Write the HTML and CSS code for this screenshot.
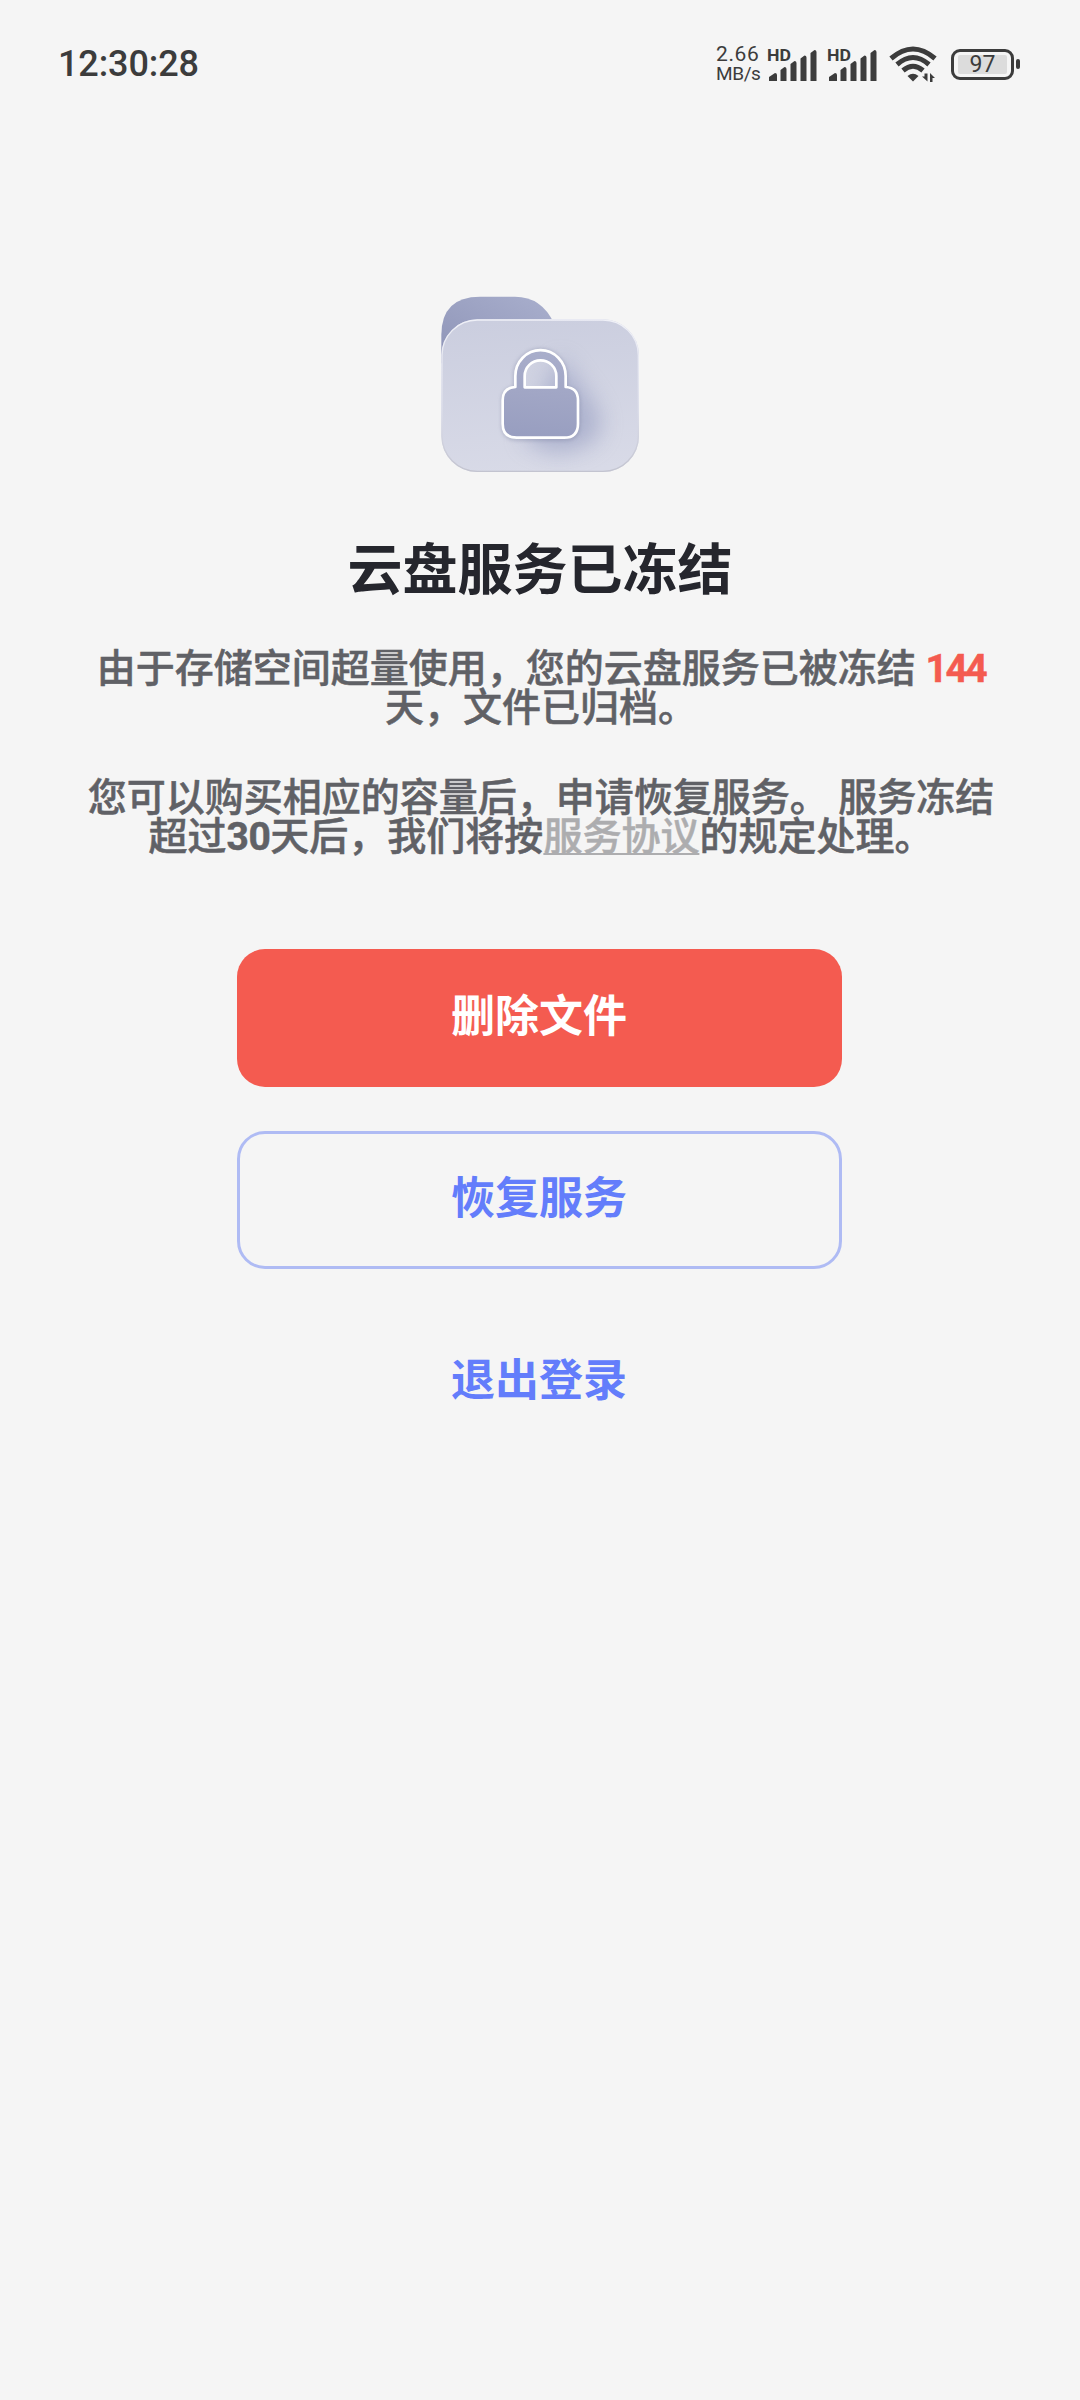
FILE: index.html
```
<!DOCTYPE html>
<html lang="zh-CN">
<head>
    <meta charset="UTF-8">
    <title>云盘服务已冻结</title>
    <link rel="stylesheet" href="styles.css">
</head>
<body>
    <div class="status-bar">
        <div class="clock">12:30:28</div>
        <div class="net-speed">
            <div class="speed-value">2.66</div>
            <div class="speed-unit">MB/s</div>
        </div>
        <svg class="signal" viewBox="0 0 52 36">
            <text x="0" y="15" textLength="24" lengthAdjust="spacingAndGlyphs">HD</text>
            <path d="M2 35v-4l6-4q2 0 2 2v6zM13.500 35V24l4-3q2 0 2 2v12zM23.500 35V18l4-3q2 0 2 2v18zM33.500 35V12.500l4-3q2 0 2 2V35zM43.500 35V7l4-3q2 0 2 2v29z"/>
        </svg>
        <svg class="signal" viewBox="0 0 52 36">
            <text x="0" y="15" textLength="24" lengthAdjust="spacingAndGlyphs">HD</text>
            <path d="M2 35v-4l6-4q2 0 2 2v6zM13.500 35V24l4-3q2 0 2 2v12zM23.500 35V18l4-3q2 0 2 2v18zM33.500 35V12.500l4-3q2 0 2 2V35zM43.500 35V7l4-3q2 0 2 2v29z"/>
        </svg>
        <svg class="wifi" viewBox="0 0 48 36">
            <g fill="none" stroke="#3c3c3c" stroke-width="5">
                <path d="M2 12.500Q24-6.500 46 12.500"/>
                <path d="M8 18.500Q24 4.500 40 18.500"/>
                <path d="M14 24.500Q24 16 34 24.500"/>
            </g>
            <path d="M18.500 30q5.500-4.500 11 0L24 35.500z"/>
            <path d="M35.500 27.500h3v8l-5.500-5h2.500zM41 36v-9l5 5h-2.500v4z"/>
        </svg>
        <div class="battery"><span>97</span></div>
        <div class="battery-cap"></div>
    </div>

    <div class="container">
        <svg class="folder" viewBox="0 0 720 630">
            <defs>
                <linearGradient id="back" x1="1" y1="0" x2="0" y2="1">
                    <stop offset="0" stop-color="#a9afcd"/>
                    <stop offset="1" stop-color="#8e94b7"/>
                </linearGradient>
                <linearGradient id="front" x1="0.400" y1="0" x2="0.500" y2="1">
                    <stop offset="0" stop-color="#cbcedf"/>
                    <stop offset="1" stop-color="#d8dae7"/>
                </linearGradient>
                <linearGradient id="edge" x1="0" y1="0" x2="0" y2="1">
                    <stop offset="0" stop-color="#eff0f7"/>
                    <stop offset="0.600" stop-color="#dcdeea"/>
                    <stop offset="1" stop-color="#c3c4d0"/>
                </linearGradient>
                <linearGradient id="lock" x1="0.500" y1="0" x2="0.400" y2="1">
                    <stop offset="0" stop-color="#a9aecb"/>
                    <stop offset="0.500" stop-color="#a1a6c5"/>
                    <stop offset="1" stop-color="#989ec0"/>
                </linearGradient>
                <filter id="blur" x="-50%" y="-50%" width="200%" height="200%">
                    <feGaussianBlur stdDeviation="34"/>
                </filter>
                <filter id="soft" x="-50%" y="-50%" width="200%" height="200%">
                    <feGaussianBlur stdDeviation="7"/>
                </filter>
                <clipPath id="panel">
                    <rect x="64" y="118" width="593" height="458" rx="108"/>
                </clipPath>
            </defs>
            <path d="M64 250V165Q64 50 180 50H285Q365 50 402 130L340 250z" fill="url(#back)"/>
            <rect x="64" y="118" width="593" height="458" rx="108" fill="url(#front)"/>
            <g clip-path="url(#panel)">
                <path d="M420 230L500 340Q550 400 540 450Q520 510 400 520L310 480z" fill="#8f96bd" opacity="0.550" filter="url(#blur)"/>
            </g>
            <rect x="66" y="120" width="589" height="454" rx="106" fill="none" stroke="url(#edge)" stroke-width="4"/>
            <path d="M286 324V288A75 77 0 0 1 436 288V324Q474 326 474 364V434Q474 476 432 476H292Q250 476 250 434V364Q250 326 286 324z" fill="none" stroke="#777d9b" stroke-width="8" opacity="0.600" filter="url(#soft)"/>
            <path d="M286 321V288A75 77 0 0 1 437 288V321Q474 323 474 361V431Q474 473 432 473H290Q248 473 248 431V361Q248 323 286 321zM314 322H409V288A47.500 47 0 0 0 314 288z" fill="url(#lock)" fill-rule="evenodd" stroke="#fff" stroke-width="8" stroke-linejoin="round"/>
        </svg>

        <h1>云盘服务已冻结</h1>

        <p>由于存储空间超量使用，您的云盘服务已被冻结 <b class="days">144</b><br>天，文件已归档。</p>
        <p>您可以购买相应的容量后，申请恢复服务。 服务冻结<br>超过<b class="num">30</b>天后，我们将按<a class="agreement">服务协议</a>的规定处理。</p>

        <div class="actions">
            <div class="btn btn-delete">删除文件</div>
            <div class="btn btn-restore">恢复服务</div>
            <div class="btn btn-logout">退出登录</div>
        </div>
    </div>
</body>
</html>
```
FILE: styles.css
```
body {
    margin: 0;
    min-height: 2400px;
    background-color: #f5f5f5;
    font-family: Roboto, "Noto Sans CJK SC", sans-serif;
}
.status-bar {
    display: flex;
    align-items: center;
    box-sizing: border-box;
    height: 128px;
    padding: 0 60px 0 58px;
    color: #3c3c3c;
}
.clock {
    flex: 1;
    font-size: 36px;
    font-weight: 500;
    letter-spacing: -0.1px;
}
.net-speed {
    width: 43px;
    margin-right: 8px;
    line-height: 20px;
}
.speed-value {
    font-size: 21px;
    letter-spacing: 0.6px;
}
.speed-unit {
    font-size: 19px;
    letter-spacing: -0.4px;
}
.signal {
    width: 52px;
    height: 36px;
    margin-right: 8px;
    fill: #3c3c3c;
    font-size: 16px;
    font-weight: bold;
}
.wifi {
    width: 48px;
    height: 36px;
    margin: 0 14px 0 2px;
    fill: #3c3c3c;
}
.battery {
    box-sizing: border-box;
    width: 63px;
    height: 31px;
    padding: 3px 4px;
    border: 3px solid #3c3c3c;
    border-radius: 9px;
}
.battery span {
    display: block;
    height: 19px;
    border-radius: 2px;
    background-color: #dcdcdc;
    font-size: 23px;
    line-height: 19px;
    text-align: center;
}
.battery-cap {
    width: 4px;
    height: 10px;
    margin-left: 2px;
    border-radius: 2px;
    background-color: #3c3c3c;
}
.container {
    display: flex;
    flex-direction: column;
    align-items: center;
    padding-top: 152px;
}
.folder {
    width: 240px;
    height: 210px;
}
h1 {
    margin: 52px 0 52px;
    color: #25262d;
    font-size: 55px;
    line-height: 56px;
}
p {
    margin: 0 0 51px;
    padding-left: 2px;
    color: #606166;
    font-size: 39px;
    font-weight: 500;
    line-height: 39px;
    text-align: center;
    white-space: nowrap;
    -webkit-text-stroke: 0.5px;
}
.days {
    color: #f45b50;
    letter-spacing: -2.5px;
}
.num {
    letter-spacing: -0.5px;
}
.agreement {
    color: #adadaf;
    text-decoration: underline;
    text-decoration-thickness: 2px;
    text-underline-offset: 3px;
}
.actions {
    display: flex;
    flex-direction: column;
    gap: 44px;
    margin: 41px 2px 0 0;
}
.btn {
    box-sizing: border-box;
    width: 605px;
    height: 138px;
    border-radius: 28px;
    color: #637dfb;
    font-size: 44px;
    font-weight: bold;
    line-height: 137px;
    text-align: center;
}
.btn-delete {
    background-color: #f45b50;
    color: white;
}
.btn-restore {
    border: 3px solid #afbbf4;
    line-height: 131px;
}
```
